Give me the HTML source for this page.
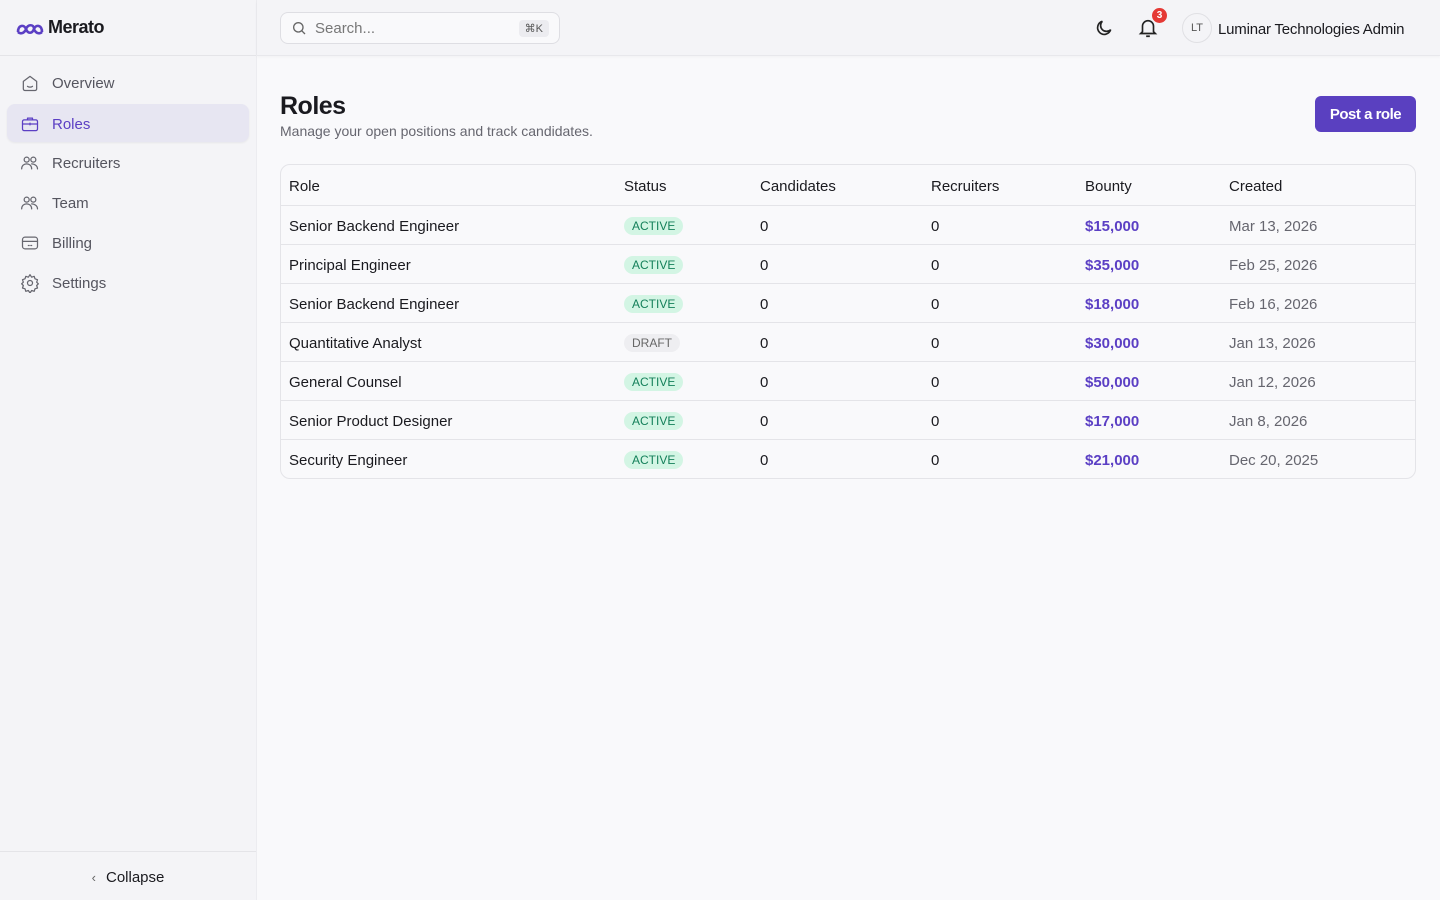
<!DOCTYPE html>
<html><head><style>
*{box-sizing:border-box;margin:0;padding:0}
body{width:1440px;height:900px;background:#f9f9fb;font-family:"Liberation Sans",sans-serif;color:#1a1a1f;position:relative;overflow:hidden}
.side{position:absolute;left:0;top:0;width:257px;height:900px;background:#f4f4f7;border-right:1px solid #ececf0}
.logo{height:56px;border-bottom:1px solid #e4e4e8;display:flex;align-items:center;padding-left:16px;font-weight:bold;font-size:18px;letter-spacing:-0.5px}
.nav{position:absolute;left:7px;width:242px;height:38px;border-radius:8px;display:flex;align-items:center;padding-left:13px;padding-top:2px;font-size:15px;color:#55555f}
.nav svg{width:20px;height:20px;margin-right:12px;fill:none;stroke:#66666f;stroke-width:1.5;stroke-linecap:round;stroke-linejoin:round}
.nav.act{background:#e7e6f2;color:#5b3fc4;box-shadow:0 1px 2px rgba(0,0,0,.06)}
.nav.act svg{stroke:#5b3fc4}
.coll{position:absolute;bottom:0;left:0;width:256px;height:49px;border-top:1px solid #e4e4e8;display:flex;align-items:center;justify-content:center;font-size:15px;padding-top:2px}
.top{position:absolute;left:257px;top:0;right:0;height:56px;background:#f4f4f7;border-bottom:1px solid #e8e8ec;box-shadow:0 1px 3px rgba(0,0,0,.04)}
.search{position:absolute;left:23px;top:12px;width:280px;height:32px;border:1px solid #dedee3;border-radius:8px;background:#f9f9fb;font-size:15px;color:#777;display:flex;align-items:center;padding-left:34px;padding-top:1px}
.kbd{position:absolute;right:10px;top:7px;font-size:11px;background:#ececf0;border-radius:4px;padding:2px 6px;color:#555}
h1{position:absolute;left:280px;top:92px;font-size:25px;font-weight:bold;letter-spacing:-0.5px}
.sub{position:absolute;left:280px;top:123px;font-size:14px;color:#66666f}
.btn{position:absolute;left:1315px;top:96px;width:101px;height:36px;border-radius:6px;background:#5a40c0;color:#fff;font-size:15px;font-weight:bold;display:flex;align-items:center;justify-content:center;letter-spacing:-0.5px;padding-top:1px}
.tbl{position:absolute;left:280px;top:164px;width:1136px;height:315px;border:1px solid #e4e4e8;border-radius:10px;background:#f9f9fb}
.row{position:absolute;left:0;width:1134px;height:39px;border-top:1px solid #e4e4e8;font-size:15px}
.row span{position:absolute;top:12px}
.hd{border-top:none;height:40px}
.hd span{top:13px}
.b{background:#d3f5e4;color:#14805a;font-size:12px;border-radius:9px;padding:2px 8px;top:11px!important}
.d{background:#eeeef1;color:#666;font-size:12px;border-radius:9px;padding:2px 8px;top:11px!important}
.m{color:#5b3fc4;font-weight:bold}
.g{color:#66666f}
</style></head><body>
<div class="side">
<div class="logo"><svg width="28" height="16" viewBox="0 0 28 16" style="margin-right:4px"><path d="M2 12C2 5 8 4 10 9C12 4 18 4 18 9C20 4 26 5 26 12M10 9C8 14 4 14 2 12M18 9C16 14 12 14 10 9M18 9C20 14 24 14 26 12" fill="none" stroke="#5b3fc4" stroke-width="2.6"/></svg>Merato</div>
<div class="nav" style="top:63px"><svg viewBox="0 0 24 24"><path d="M4 10l8-6 8 6v9a2 2 0 0 1-2 2H6a2 2 0 0 1-2-2z"/><path d="M9 16q3 2 6 0"/></svg>Overview</div>
<div class="nav act" style="top:104px"><svg viewBox="0 0 24 24"><rect x="3" y="7" width="18" height="13" rx="2"/><path d="M9 7V5h6v2M3 12h18M12 11v2"/></svg>Roles</div>
<div class="nav" style="top:143px"><svg viewBox="0 0 24 24"><circle cx="8" cy="8" r="3"/><circle cx="16" cy="8" r="3"/><path d="M2 19c0-4 3-6 6-6s6 2 6 6M14 13c3 0 7 2 7 6"/></svg>Recruiters</div>
<div class="nav" style="top:183px"><svg viewBox="0 0 24 24"><circle cx="8" cy="8" r="3"/><circle cx="16" cy="8" r="3"/><path d="M2 19c0-4 3-6 6-6s6 2 6 6M14 13c3 0 7 2 7 6"/></svg>Team</div>
<div class="nav" style="top:223px"><svg viewBox="0 0 24 24"><rect x="3" y="5" width="18" height="14" rx="3"/><path d="M3 10h18M10 15h1M13 15h1"/></svg>Billing</div>
<div class="nav" style="top:263px"><svg viewBox="0 0 24 24"><circle cx="12" cy="12" r="3"/><path d="M12 2l2 3 3-1 1 3 3 1-1 3 2 2-2 2 1 3-3 1-1 3-3-1-2 3-2-3-3 1-1-3-3-1 1-3-2-2 2-2-1-3 3-1 1-3 3 1z"/></svg>Settings</div>
<div class="coll"><span style="margin-right:10px;color:#666;font-size:13px">‹</span>Collapse</div>
</div>
<div class="top">
<div class="search"><svg width="16" height="16" viewBox="0 0 24 24" style="position:absolute;left:10px;top:7px" fill="none" stroke="#666" stroke-width="2"><circle cx="11" cy="11" r="7"/><path d="M16 16l5 5"/></svg>Search...<span class="kbd">⌘K</span></div>
<svg width="20" height="20" viewBox="0 0 24 24" style="position:absolute;left:837px;top:18px" fill="none" stroke="#222" stroke-width="2"><path d="M20 14A8 8 0 1 1 10 4a6 6 0 0 0 10 10z"/></svg>
<svg width="22" height="22" viewBox="0 0 24 24" style="position:absolute;left:880px;top:17px" fill="none" stroke="#222" stroke-width="1.8"><path d="M6 16V10a6 6 0 0 1 12 0v6l2 2H4zM10 21h4"/></svg>
<div style="position:absolute;left:895px;top:8px;width:15px;height:15px;border-radius:50%;background:#e53935;color:#fff;font-size:10px;font-weight:bold;text-align:center;line-height:15px">3</div>
<div style="position:absolute;left:925px;top:13px;width:30px;height:30px;border-radius:50%;border:1px solid #e0e0e4;background:#f4f4f7;font-size:11px;color:#555;text-align:center;line-height:28px">LT</div>
<div style="position:absolute;left:961px;top:21px;font-size:15px;letter-spacing:-0.2px">Luminar Technologies Admin</div>
</div>
<h1>Roles</h1>
<div class="sub">Manage your open positions and track candidates.</div>
<div class="btn">Post a role</div>
<div class="tbl">
<div class="row hd" style="top:0"><span style="left:8px">Role</span><span style="left:343px">Status</span><span style="left:479px">Candidates</span><span style="left:650px">Recruiters</span><span style="left:804px">Bounty</span><span style="left:948px">Created</span></div>
<div class="row" style="top:40px"><span style="left:8px">Senior Backend Engineer</span><span class="b" style="left:343px">ACTIVE</span><span style="left:479px">0</span><span style="left:650px">0</span><span class="m" style="left:804px">$15,000</span><span class="g" style="left:948px">Mar 13, 2026</span></div>
<div class="row" style="top:79px"><span style="left:8px">Principal Engineer</span><span class="b" style="left:343px">ACTIVE</span><span style="left:479px">0</span><span style="left:650px">0</span><span class="m" style="left:804px">$35,000</span><span class="g" style="left:948px">Feb 25, 2026</span></div>
<div class="row" style="top:118px"><span style="left:8px">Senior Backend Engineer</span><span class="b" style="left:343px">ACTIVE</span><span style="left:479px">0</span><span style="left:650px">0</span><span class="m" style="left:804px">$18,000</span><span class="g" style="left:948px">Feb 16, 2026</span></div>
<div class="row" style="top:157px"><span style="left:8px">Quantitative Analyst</span><span class="d" style="left:343px">DRAFT</span><span style="left:479px">0</span><span style="left:650px">0</span><span class="m" style="left:804px">$30,000</span><span class="g" style="left:948px">Jan 13, 2026</span></div>
<div class="row" style="top:196px"><span style="left:8px">General Counsel</span><span class="b" style="left:343px">ACTIVE</span><span style="left:479px">0</span><span style="left:650px">0</span><span class="m" style="left:804px">$50,000</span><span class="g" style="left:948px">Jan 12, 2026</span></div>
<div class="row" style="top:235px"><span style="left:8px">Senior Product Designer</span><span class="b" style="left:343px">ACTIVE</span><span style="left:479px">0</span><span style="left:650px">0</span><span class="m" style="left:804px">$17,000</span><span class="g" style="left:948px">Jan 8, 2026</span></div>
<div class="row" style="top:274px"><span style="left:8px">Security Engineer</span><span class="b" style="left:343px">ACTIVE</span><span style="left:479px">0</span><span style="left:650px">0</span><span class="m" style="left:804px">$21,000</span><span class="g" style="left:948px">Dec 20, 2025</span></div>
</div>
</body></html>
